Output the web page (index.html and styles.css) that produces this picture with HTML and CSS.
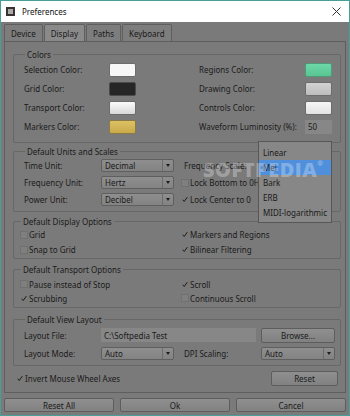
FILE: index.html
```html
<!DOCTYPE html>
<html lang="en">
<head>
  <meta charset="UTF-8" />
  <meta name="viewport" content="width=device-width, initial-scale=1.0"/>
  <title>Preferences</title>
  <link rel="stylesheet" href="styles.css">
</head>
<body>
  <div class="window">
    <div class="titlebar">
      <span class="app-icon"><span></span></span>
      <span class="title">Preferences</span>
      <svg class="close" width="9" height="9" viewBox="0 0 9 9">
        <path d="M0.5 0.5L8.5 8.5M8.5 0.5L0.5 8.5" stroke="#333" stroke-width="1" fill="none"/>
      </svg>
    </div>

    <div class="content">
      <div class="tabs">
        <div class="tab">Device</div>
        <div class="tab active">Display</div>
        <div class="tab">Paths</div>
        <div class="tab">Keyboard</div>
      </div>

      <div class="pane">
        <fieldset class="group colors">
          <legend>Colors</legend>
          <div class="color-grid">
            <span>Selection Color:</span>
            <span class="swatch white"></span>
            <span class="right-label">Regions Color:</span>
            <span class="swatch green"></span>

            <span>Grid Color:</span>
            <span class="swatch dark"></span>
            <span class="right-label">Drawing Color:</span>
            <span class="swatch gray"></span>

            <span>Transport Color:</span>
            <span class="swatch silver"></span>
            <span class="right-label">Controls Color:</span>
            <span class="swatch light"></span>

            <span>Markers Color:</span>
            <span class="swatch gold"></span>
            <span class="right-label">Waveform Luminosity (%):</span>
            <span class="field small">50</span>
          </div>
        </fieldset>

        <fieldset class="group units">
          <legend>Default Units and Scales</legend>
          <div class="units-grid">
            <span>Time Unit:</span>
            <div class="combo"><span>Decimal</span><i></i></div>
            <div class="right">
              <span class="scale-label">Frequency Scale:</span>
            </div>

            <span>Frequency Unit:</span>
            <div class="combo"><span>Hertz</span><i></i></div>
            <div class="right">
              <label class="cb"><span class="box"></span>Lock Bottom to 0Hz</label>
            </div>

            <span>Power Unit:</span>
            <div class="combo"><span>Decibel</span><i></i></div>
            <div class="right">
              <label class="cb"><span class="box on"><svg width="7" height="7" viewBox="0 0 7 7"><path d="M0.8 3.8L2.6 5.8L6.2 0.8" stroke="#151515" stroke-width="1.1" fill="none"/></svg></span>Lock Center to 0</label>
            </div>
          </div>
        </fieldset>

        <fieldset class="group display">
          <legend>Default Display Options</legend>
          <div class="check-grid">
            <label class="cb"><span class="box"></span>Grid</label>
            <label class="cb"><span class="box on"><svg width="7" height="7" viewBox="0 0 7 7"><path d="M0.8 3.8L2.6 5.8L6.2 0.8" stroke="#151515" stroke-width="1.1" fill="none"/></svg></span>Markers and Regions</label>
            <label class="cb"><span class="box"></span>Snap to Grid</label>
            <label class="cb"><span class="box on"><svg width="7" height="7" viewBox="0 0 7 7"><path d="M0.8 3.8L2.6 5.8L6.2 0.8" stroke="#151515" stroke-width="1.1" fill="none"/></svg></span>Bilinear Filtering</label>
          </div>
        </fieldset>

        <fieldset class="group transport">
          <legend>Default Transport Options</legend>
          <div class="check-grid">
            <label class="cb"><span class="box"></span>Pause instead of Stop</label>
            <label class="cb"><span class="box on"><svg width="7" height="7" viewBox="0 0 7 7"><path d="M0.8 3.8L2.6 5.8L6.2 0.8" stroke="#151515" stroke-width="1.1" fill="none"/></svg></span>Scroll</label>
            <label class="cb"><span class="box on"><svg width="7" height="7" viewBox="0 0 7 7"><path d="M0.8 3.8L2.6 5.8L6.2 0.8" stroke="#151515" stroke-width="1.1" fill="none"/></svg></span>Scrubbing</label>
            <label class="cb"><span class="box"></span>Continuous Scroll</label>
          </div>
        </fieldset>

        <fieldset class="group layout">
          <legend>Default View Layout</legend>
          <div class="layout-grid">
            <span>Layout File:</span>
            <span class="field path">C:\Softpedia Test</span>
            <button class="btn">Browse...</button>

            <span>Layout Mode:</span>
            <div class="combo"><span>Auto</span><i></i></div>
            <span class="dpi-label">DPI Scaling:</span>
            <div class="combo"><span>Auto</span><i></i></div>
          </div>
        </fieldset>

        <div class="pane-footer">
          <label class="cb"><span class="box on"><svg width="7" height="7" viewBox="0 0 7 7"><path d="M0.8 3.8L2.6 5.8L6.2 0.8" stroke="#151515" stroke-width="1.1" fill="none"/></svg></span>Invert Mouse Wheel Axes</label>
          <button class="btn reset">Reset</button>
        </div>
      </div>

      <div class="dialog-buttons">
        <button class="btn">Reset All</button>
        <button class="btn">Ok</button>
        <button class="btn">Cancel</button>
      </div>
    </div>

    <!-- open dropdown of the Frequency Scale combo -->
    <ul class="popup">
      <li>Linear</li>
      <li class="selected">Mel</li>
      <li>Bark</li>
      <li>ERB</li>
      <li>MIDI-logarithmic</li>
    </ul>

    <div class="watermark">SOFTPEDIA<sup>®</sup></div>
  </div>
</body>
</html>
```

FILE: styles.css
```css
* {
  box-sizing: border-box;
}

body {
  margin: 0;
  font-family: 'Noto Sans', 'Open Sans', sans-serif;
  font-size: 8px;
  line-height: 11px;
  color: #1a1a1a;
  background: #7a7a7a;
}

.window {
  position: relative;
  width: 350px;
  height: 416px;
  border: 1px solid #46a097;
  background: #7a7a7a;
  display: flex;
  flex-direction: column;
  overflow: hidden;
}

/* title bar */
.titlebar {
  height: 21px;
  background: #fff;
  display: flex;
  align-items: center;
  padding: 0 6px 0 5px;
  flex-shrink: 0;
}

.app-icon {
  width: 9px;
  height: 9px;
  background: #3a3232;
  display: flex;
  align-items: center;
  justify-content: center;
  margin-right: 7px;
}

.app-icon span {
  width: 5px;
  height: 5px;
  background: #a9a9a9;
}

.title {
  color: #111;
  flex: 1;
}

.close {
  margin-right: 2px;
}

/* content */
.content {
  flex: 1;
  display: flex;
  flex-direction: column;
  padding: 2px 3px 3px;
}

.tabs {
  display: flex;
  gap: 1px;
  height: 17px;
}

.tab {
  padding: 0 6px;
  display: flex;
  align-items: center;
  border: 1px solid #5f5f5f;
  border-bottom: none;
  border-radius: 2px 2px 0 0;
  background: #7d7d7d;
}

.tab.active {
  background: #8a8a8a;
}

.pane {
  border: 1px solid #5e5e5e;
  padding: 7px 4px 6px 4px;
  display: flex;
  flex-direction: column;
}

/* group boxes */
.group {
  margin: 0 0 0 4px;
  padding: 0;
  border: 1px solid #676767;
  border-radius: 2px;
  min-width: 0;
}

.group legend {
  margin-left: 1px;
  padding: 0 2px;
  line-height: 11px;
}

.colors {
  padding: 0 8px 6px 10px;
}

.units {
  margin-top: 3px;
  padding: 0 0 3px 10px;
}

.display {
  margin-top: 4px;
  padding: 0 0 1px 6px;
}

.transport {
  margin-top: 5px;
  padding: 2px 0 2px 6px;
}

.layout {
  margin-top: 6px;
  padding: 1px 8px 3px 10px;
}

.color-grid {
  display: grid;
  grid-template-columns: 85px 27px 1fr 27px;
  grid-auto-rows: 19px;
  align-items: center;
}

.right-label {
  padding-left: 63px;
}

.swatch {
  height: 14px;
  border-radius: 2px;
  border: 1px solid #6c6c6c;
}

.swatch.white { background: #f7f7f7; }
.swatch.dark { background: #262626; border-color: #4a4a4a; }
.swatch.silver { background: linear-gradient(#fafafa, #d9d9d9); }
.swatch.gold { background: linear-gradient(#dcc265, #c9a94a); border-color: #8c7a45; }
.swatch.green { background: linear-gradient(#6ed8a8, #58c592); border-color: #4f9a78; }
.swatch.gray { background: linear-gradient(#d2d2d2, #bdbdbd); }
.swatch.light { background: linear-gradient(#f6f6f6, #e2e2e2); }

.field {
  height: 14px;
  background: #878787;
  display: flex;
  align-items: center;
  padding-left: 3px;
}

/* combos */
.combo {
  height: 13px;
  border: 1px solid #5f5f5f;
  border-radius: 2px;
  background: linear-gradient(#8e8e8e, #838383);
  display: flex;
  align-items: center;
}

.combo span {
  flex: 1;
  padding-left: 3px;
}

.combo i {
  width: 11px;
  height: 100%;
  border-left: 1px solid #6d6d6d;
  position: relative;
}

.combo i::after {
  content: "";
  position: absolute;
  left: 3px;
  top: 4px;
  border-left: 2px solid transparent;
  border-right: 2px solid transparent;
  border-top: 3px solid #1c1c1c;
}

.units-grid {
  display: grid;
  grid-template-columns: 77px 73px 1fr;
  grid-auto-rows: 17px;
  align-items: center;
}

.units-grid .right {
  padding-left: 7px;
  display: flex;
  align-items: center;
}

.scale-label {
  padding-left: 3px;
}

/* checkboxes */
.cb {
  display: flex;
  align-items: center;
  white-space: nowrap;
}

.box {
  width: 8px;
  height: 8px;
  border: 1px solid #707070;
  background: #7f7f7f;
  margin-right: 1px;
  display: flex;
  align-items: center;
  justify-content: center;
}

.box.on {
  border-color: transparent;
  background: transparent;
}

.check-grid {
  display: grid;
  grid-template-columns: 161px 1fr;
  grid-auto-rows: 15px;
  align-items: center;
}

.transport .check-grid {
  grid-auto-rows: 14px;
}

.layout-grid {
  display: grid;
  grid-template-columns: 77px 73px 87px 74px;
  grid-auto-rows: 18px;
  align-items: center;
}

.field.path {
  grid-column: 2 / 4;
  width: 155px;
}

.dpi-label {
  padding-left: 10px;
}

/* buttons */
.btn {
  font: inherit;
  color: #1a1a1a;
  height: 15px;
  padding: 0;
  border: 1px solid #5d5d5d;
  border-radius: 2px;
  background: linear-gradient(#8f8f8f, #818181);
}

.pane-footer {
  margin-top: 5px;
  height: 15px;
  display: flex;
  align-items: center;
  justify-content: space-between;
  padding: 0 3px 0 7px;
}

.btn.reset {
  width: 67px;
}

.dialog-buttons {
  margin-top: 5px;
  display: flex;
  gap: 6px;
}

.dialog-buttons .btn {
  flex: 1;
  height: 14px;
}

/* open dropdown */
.popup {
  position: absolute;
  left: 257px;
  top: 140px;
  width: 74px;
  margin: 0;
  padding: 3px 0 2px;
  list-style: none;
  background: #878787;
  border: 1px solid #575757;
}

.popup li {
  height: 15px;
  line-height: 15px;
  padding-left: 4px;
}

.popup li.selected {
  background: #4f8fdc;
}

.watermark {
  position: absolute;
  left: 202px;
  top: 158px;
  font-family: 'Open Sans', sans-serif;
  font-weight: 800;
  font-size: 20px;
  line-height: 22px;
  letter-spacing: 0.5px;
  color: rgba(255, 255, 255, 0.3);
  pointer-events: none;
}

.watermark sup {
  font-size: 7px;
  vertical-align: top;
  line-height: 10px;
}
```
